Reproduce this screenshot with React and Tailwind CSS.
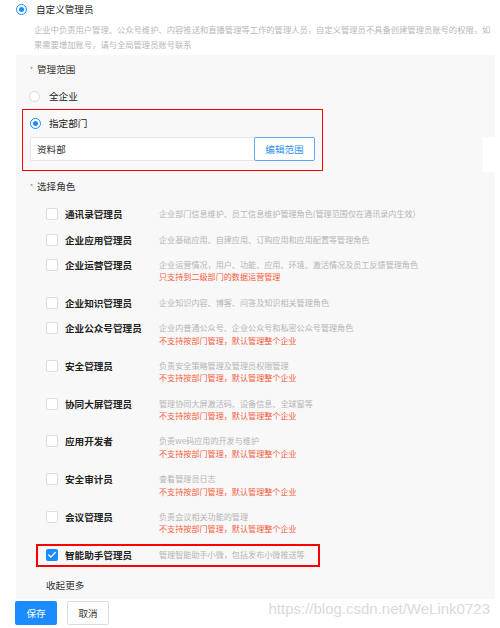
import { Check } from 'lucide-react';

const roles = [
  { name: '通讯录管理员', desc: '企业部门信息维护、员工信息维护管理角色(管理范围仅在通讯录内生效)' },
  { name: '企业应用管理员', desc: '企业基础应用、自建应用、订购应用和应用配置等管理角色' },
  { name: '企业运营管理员', desc: '企业运营情况，用户、功能、应用、环境、激活情况及员工反馈管理角色', warn: '只支持到二级部门的数据运营管理' },
  { name: '企业知识管理员', desc: '企业知识内容、博客、问答及知识相关管理角色' },
  { name: '企业公众号管理员', desc: '企业内普通公众号、企业公众号和私密公众号管理角色', warn: '不支持按部门管理，默认管理整个企业' },
  { name: '安全管理员', desc: '负责安全策略管理及管理员权限管理', warn: '不支持按部门管理，默认管理整个企业' },
  { name: '协同大屏管理员', desc: '管理协同大屏激活码、设备信息、全球窗等', warn: '不支持按部门管理，默认管理整个企业' },
  { name: '应用开发者', desc: '负责we码应用的开发与维护', warn: '不支持按部门管理，默认管理整个企业' },
  { name: '安全审计员', desc: '查看管理员日志', warn: '不支持按部门管理，默认管理整个企业' },
  { name: '会议管理员', desc: '负责会议相关功能的管理', warn: '不支持按部门管理，默认管理整个企业' },
];

function Radio({ checked }) {
  return (
    <span
      className={`flex h-[11px] w-[11px] shrink-0 items-center justify-center rounded-full border bg-white ${
        checked ? 'border-[#1a8cff]' : 'border-[#dcdcdc]'
      }`}
    >
      {checked && <span className="h-[5px] w-[5px] rounded-full bg-[#1a8cff]" />}
    </span>
  );
}

function Box({ checked }) {
  return checked ? (
    <span className="flex h-[12px] w-[12px] shrink-0 items-center justify-center rounded-[2px] bg-[#1a8cff]">
      <Check className="h-[10px] w-[10px] text-white" strokeWidth={3} />
    </span>
  ) : (
    <span className="h-[12px] w-[12px] shrink-0 rounded-[2px] border border-[#dedede] bg-white" />
  );
}

function RoleRow({ role, checked }) {
  return (
    <div className="relative flex items-start py-[6.4px] pl-[30px] leading-[12.5px]">
      {checked && (
        <span className="pointer-events-none absolute left-[20px] top-[1.5px] bottom-[0.5px] w-[284px] border-2 border-[#f00]" />
      )}
      <Box checked={checked} />
      <span className="ml-[7px] w-[94px] shrink-0 text-[9.6px] font-bold text-[#222]">{role.name}</span>
      <div className="text-[8.1px]">
        <div className="text-[#b5b5b5]">{role.desc}</div>
        {role.warn && <div className="text-[#f5603f]">{role.warn}</div>}
      </div>
    </div>
  );
}

export default function App() {
  return (
    <div
      className="relative h-[628px] w-[500px] overflow-hidden bg-white text-[#333]"
      style={{ fontFamily: '"Noto Sans CJK SC", "Noto Sans", sans-serif' }}
    >
      <div className="flex items-center gap-[9px] pl-[16px] pt-[3px] leading-[12px]">
        <Radio checked />
        <span className="text-[9.6px] text-[#222]">自定义管理员</span>
      </div>
      <p className="mt-[7px] pl-[34px] pr-[8px] text-[8.3px] leading-[15px] text-[#b8b8b8]">
        企业中负责用户管理、公众号维护、内容推送和直播管理等工作的管理人员，自定义管理员不具备创建管理员账号的权限，如果需要增加账号，请与全局管理员账号联系
      </p>

      <div className="ml-[16px] mt-[3px] h-[544px] w-[479px] bg-[#f8f8f8]">
        <div className="flex items-center pl-[14px] pt-[8px] text-[9.6px] leading-[12px]">
          <span className="w-[7px] text-[7px] text-[#f5533d]">*</span>
          <span className="text-[#333]">管理范围</span>
        </div>

        <div className="mt-[15px] flex items-center gap-[9px] pl-[13px] text-[9.6px] leading-[12px]">
          <Radio />
          <span className="text-[#222]">全企业</span>
        </div>

        <div className="ml-[6px] mt-[7px] w-[301px] border-[1.5px] border-[#f00] px-[7px] pb-[9px] pt-[7px]">
          <div className="flex items-center gap-[8px] text-[9.6px] leading-[12px]">
            <Radio checked />
            <span className="text-[#222]">指定部门</span>
          </div>
          <div className="mt-[8px] flex h-[24px]">
            <div className="flex w-[224px] items-center rounded-l-[2px] border border-r-0 border-[#e6e6e6] bg-white pl-[6px] text-[9.6px] text-[#333]">
              资料部
            </div>
            <button className="w-[61px] rounded-[2px] border border-[#5aaaf5] bg-white text-[9.6px] text-[#2e8fee]">
              编辑范围
            </button>
          </div>
        </div>

        <div className="mt-[9px] flex items-center pl-[14px] text-[9.6px] leading-[12px]">
          <span className="w-[7px] text-[7px] text-[#f5533d]">*</span>
          <span className="text-[#333]">选择角色</span>
        </div>

        <div className="mt-[10px]">
          {roles.map((r) => (
            <RoleRow key={r.name} role={r} />
          ))}
          <RoleRow role={{ name: '智能助手管理员', desc: '管理智能助手小微，包括发布小微推送等' }} checked />
        </div>

        <div className="pl-[30px] pt-[11px] text-[9.6px] leading-[12px] text-[#333]">收起更多</div>
      </div>

      <div className="flex items-center gap-[10px] pl-[15px] pt-[2px]">
        <button className="h-[24px] w-[42px] rounded-[2px] bg-[#1a8cff] text-[9.6px] text-white">保存</button>
        <button className="h-[24px] w-[42px] rounded-[2px] border border-[#dcdcdc] bg-white text-[9.6px] text-[#333]">
          取消
        </button>
      </div>

      <span className="pointer-events-none absolute right-[10px] top-[598px] font-['Liberation_Sans',sans-serif] text-[15px] text-[#dadada]">
        https://blog.csdn.net/WeLink0723
      </span>
      <span className="pointer-events-none absolute right-0 top-[137px] h-[35px] w-[17px] bg-white" />
    </div>
  );
}
